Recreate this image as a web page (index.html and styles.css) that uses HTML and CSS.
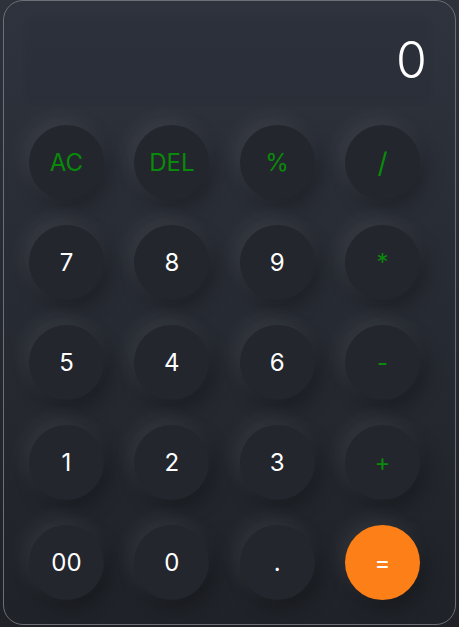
FILE: index.html
```html
<!DOCTYPE html>
<html lang="en">
<head>
    <meta charset="UTF-8">
    <meta name="viewport" content="width=device-width, initial-scale=1.0">
    <title>Calculator</title>
    <link rel="stylesheet" href="styles.css">
</head>
<body>
    <div class="calculator">
        <!-- 显示区 -->
        <div class="display">0</div>
        <!-- 按键 -->
        <div class="keys">
            <button class="key op">AC</button>
            <button class="key op">DEL</button>
            <button class="key op">%</button>
            <button class="key op slash">/</button>

            <button class="key">7</button>
            <button class="key">8</button>
            <button class="key">9</button>
            <button class="key op">*</button>

            <button class="key">5</button>
            <button class="key">4</button>
            <button class="key">6</button>
            <button class="key op">-</button>

            <button class="key">1</button>
            <button class="key">2</button>
            <button class="key">3</button>
            <button class="key op">+</button>

            <button class="key">00</button>
            <button class="key">0</button>
            <button class="key">.</button>
            <button class="key equal">=</button>
        </div>
    </div>
</body>
</html>
```

FILE: styles.css
```css
html {
    background: linear-gradient(#2d323b, #1f2127);
    min-height: 100%;
}
body {
    margin: 0;
    font-family: "Inter", "Open Sans", sans-serif;
}
.calculator {
    box-sizing: border-box;
    width: 453px;
    height: 625px;
    margin-left: 3px;
    border: 1px solid #6c6f75;
    border-radius: 20px;
    background: linear-gradient(#2e333d, #1f2228);
    padding: 19px 0 0 24px;
}
.display {
    width: 400px;
    height: 80px;
    line-height: 80px;
    text-align: right;
    padding-right: 1px;
    box-sizing: border-box;
    color: #fff;
    font-size: 50px;
    font-weight: 300;
    background: rgba(0, 0, 0, 0.03);
    box-shadow: 0 0 8px rgba(0, 0, 0, 0.06);
}
.keys {
    display: grid;
    grid-template-columns: repeat(4, 75px);
    column-gap: 30.33px;
    row-gap: 25px;
    margin-top: 25px;
    padding-left: 1px;
}
.key {
    width: 75px;
    height: 75px;
    border: none;
    outline: none;
    border-radius: 50%;
    background: #23262d;
    color: #fff;
    font-family: inherit;
    font-size: 24px;
    padding: 0;
    box-shadow: -5px -7px 20px rgba(255, 255, 255, 0.08),
                5px 7px 20px rgba(0, 0, 0, 0.3);
}
.key.op {
    color: #0a8a0a;
}
.key.slash {
    font-size: 28px;
}
.key.equal {
    background: #fc7f17;
    color: #fff;
}
```
